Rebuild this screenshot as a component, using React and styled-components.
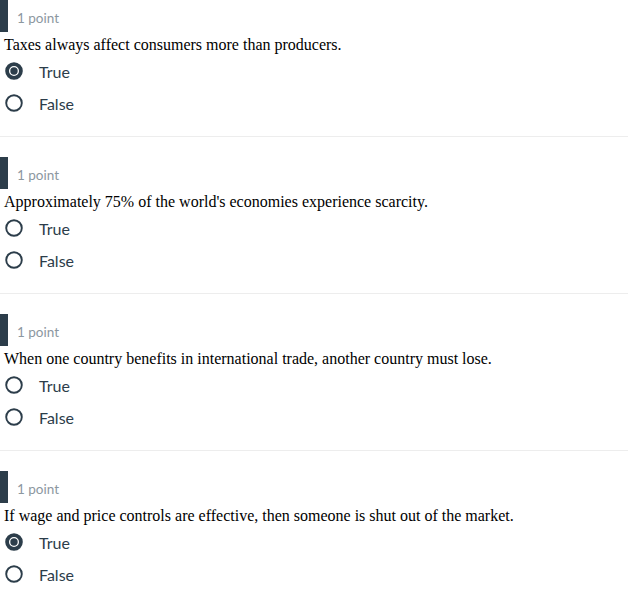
import styled, { createGlobalStyle } from 'styled-components';

const GlobalStyle = createGlobalStyle`
  body {
    margin: 0;
    background: #ffffff;
  }
`;

const questions = [
  { text: 'Taxes always affect consumers more than producers.', answer: 'True' },
  { text: "Approximately 75% of the world's economies experience scarcity.", answer: null },
  { text: 'When one country benefits in international trade, another country must lose.', answer: null },
  { text: 'If wage and price controls are effective, then someone is shut out of the market.', answer: 'True' },
];

const RadioIcon = ({ checked }) => (
  <svg width="18" height="18" viewBox="0 0 18 18">
    {checked ? (
      <>
        <circle cx="9" cy="9" r="6.9" fill="none" stroke="#2c3d4a" strokeWidth="3.8" />
        <circle cx="9" cy="9" r="3.7" fill="#2c3d4a" />
      </>
    ) : (
      <circle cx="9" cy="9" r="7.8" fill="none" stroke="#2c3d4a" strokeWidth="1.9" />
    )}
  </svg>
);

const App = () => (
  <Page>
    <GlobalStyle />
    {questions.map((q, i) => (
      <Question key={i} last={i === questions.length - 1}>
        <Points>1 point</Points>
        <Prompt>{q.text}</Prompt>
        <Options>
          {['True', 'False'].map((opt) => (
            <Option key={opt}>
              <RadioIcon checked={q.answer === opt} />
              <Label>{opt}</Label>
            </Option>
          ))}
        </Options>
      </Question>
    ))}
  </Page>
);

const Page = styled.div`
  width: 628px;
  display: flex;
  flex-direction: column;
`;

const Question = styled.div`
  padding-bottom: 17px;
  margin-bottom: ${(p) => (p.last ? '0' : '20px')};
  border-bottom: ${(p) => (p.last ? 'none' : '1px solid #ededed')};
`;

const Points = styled.div`
  height: 32px;
  box-sizing: border-box;
  padding-top: 3px;
  display: flex;
  align-items: center;
  padding-left: 9px;
  border-left: 8px solid #2c3d4a;
  font-family: Lato, 'Noto Sans', sans-serif;
  font-size: 13.5px;
  color: #8c979f;
`;

const Prompt = styled.div`
  margin-top: 3px;
  padding-left: 4px;
  font-family: 'Liberation Serif', 'Times New Roman', serif;
  font-size: 16px;
  line-height: 20px;
  color: #000000;
`;

const Options = styled.div`
  display: flex;
  flex-direction: column;
`;

const Option = styled.div`
  height: 32px;
  display: flex;
  align-items: center;
  padding-left: 4.5px;
  gap: 16.5px;
`;

const Label = styled.span`
  font-family: Lato, 'Noto Sans', sans-serif;
  font-size: 16px;
  color: #2c3d4a;
`;

export default App;
